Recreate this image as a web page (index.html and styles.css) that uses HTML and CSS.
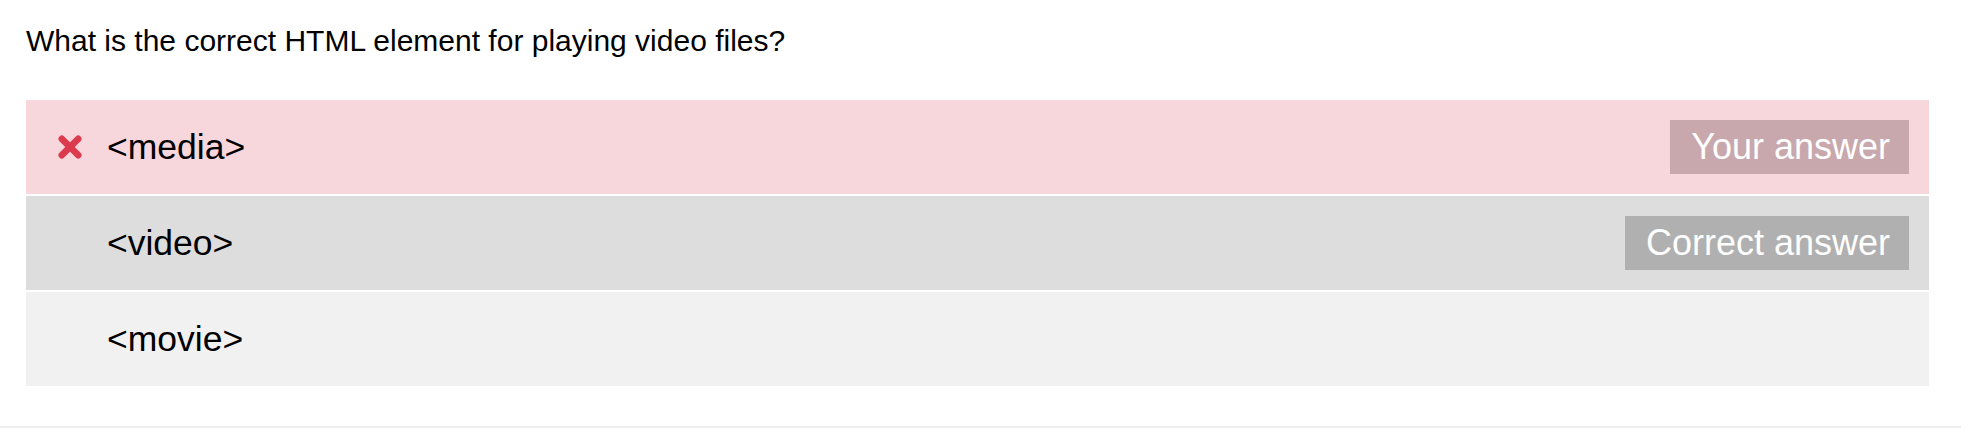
FILE: index.html
```html
<!DOCTYPE html>
<html>
<head>
<meta charset="utf-8">
<link rel="stylesheet" href="styles.css">
</head>
<body>
<div class="quiz">
  <p class="question">What is the correct HTML element for playing video files?</p>
  <div class="options">
    <div class="option wrong">
      <span class="mark"><svg width="24" height="24" viewBox="0 0 24 24"><path d="M3.8 3.8 L20.2 20.2 M20.2 3.8 L3.8 20.2" stroke="#dc3a4f" stroke-width="6.6" stroke-linecap="round"/></svg></span>
      <span class="label">&lt;media&gt;</span>
      <span class="badge badge-yours">Your answer</span>
    </div>
    <div class="option correct">
      <span class="mark"></span>
      <span class="label">&lt;video&gt;</span>
      <span class="badge badge-correct">Correct answer</span>
    </div>
    <div class="option plain">
      <span class="mark"></span>
      <span class="label">&lt;movie&gt;</span>
    </div>
  </div>
</div>
<div class="rule"></div>
</body>
</html>
```
FILE: styles.css
```css
html, body {
  margin: 0;
  padding: 0;
  background: #ffffff;
  font-family: "Liberation Sans", Arial, sans-serif;
  color: #000;
}
.quiz {
  padding: 24px 51px 0 26px;
}
.question {
  margin: 0 0 42px 0;
  font-size: 30px;
  line-height: 34px;
}
.options {
  display: flex;
  flex-direction: column;
  gap: 2px;
}
.option {
  display: flex;
  align-items: center;
  height: 94px;
  padding: 0 20px 0 32px;
}
.wrong { background: #f7d6dc; }
.correct { background: #dddddd; }
.plain { background: #f1f1f1; }
.mark {
  width: 24px;
  height: 24px;
  display: flex;
  margin-right: 25px;
}
.label {
  font-size: 35.5px;
  flex: 1;
}
.badge {
  display: flex;
  align-items: center;
  height: 54px;
  padding: 0 19px 0 21px;
  font-size: 36px;
  color: #ffffff;
}
.badge-yours { background: #c8a8ad; }
.badge-correct { background: #b0b0b0; }
.rule {
  margin-top: 40px;
  width: 1961px;
  height: 2px;
  background: #eeeeee;
}
```
